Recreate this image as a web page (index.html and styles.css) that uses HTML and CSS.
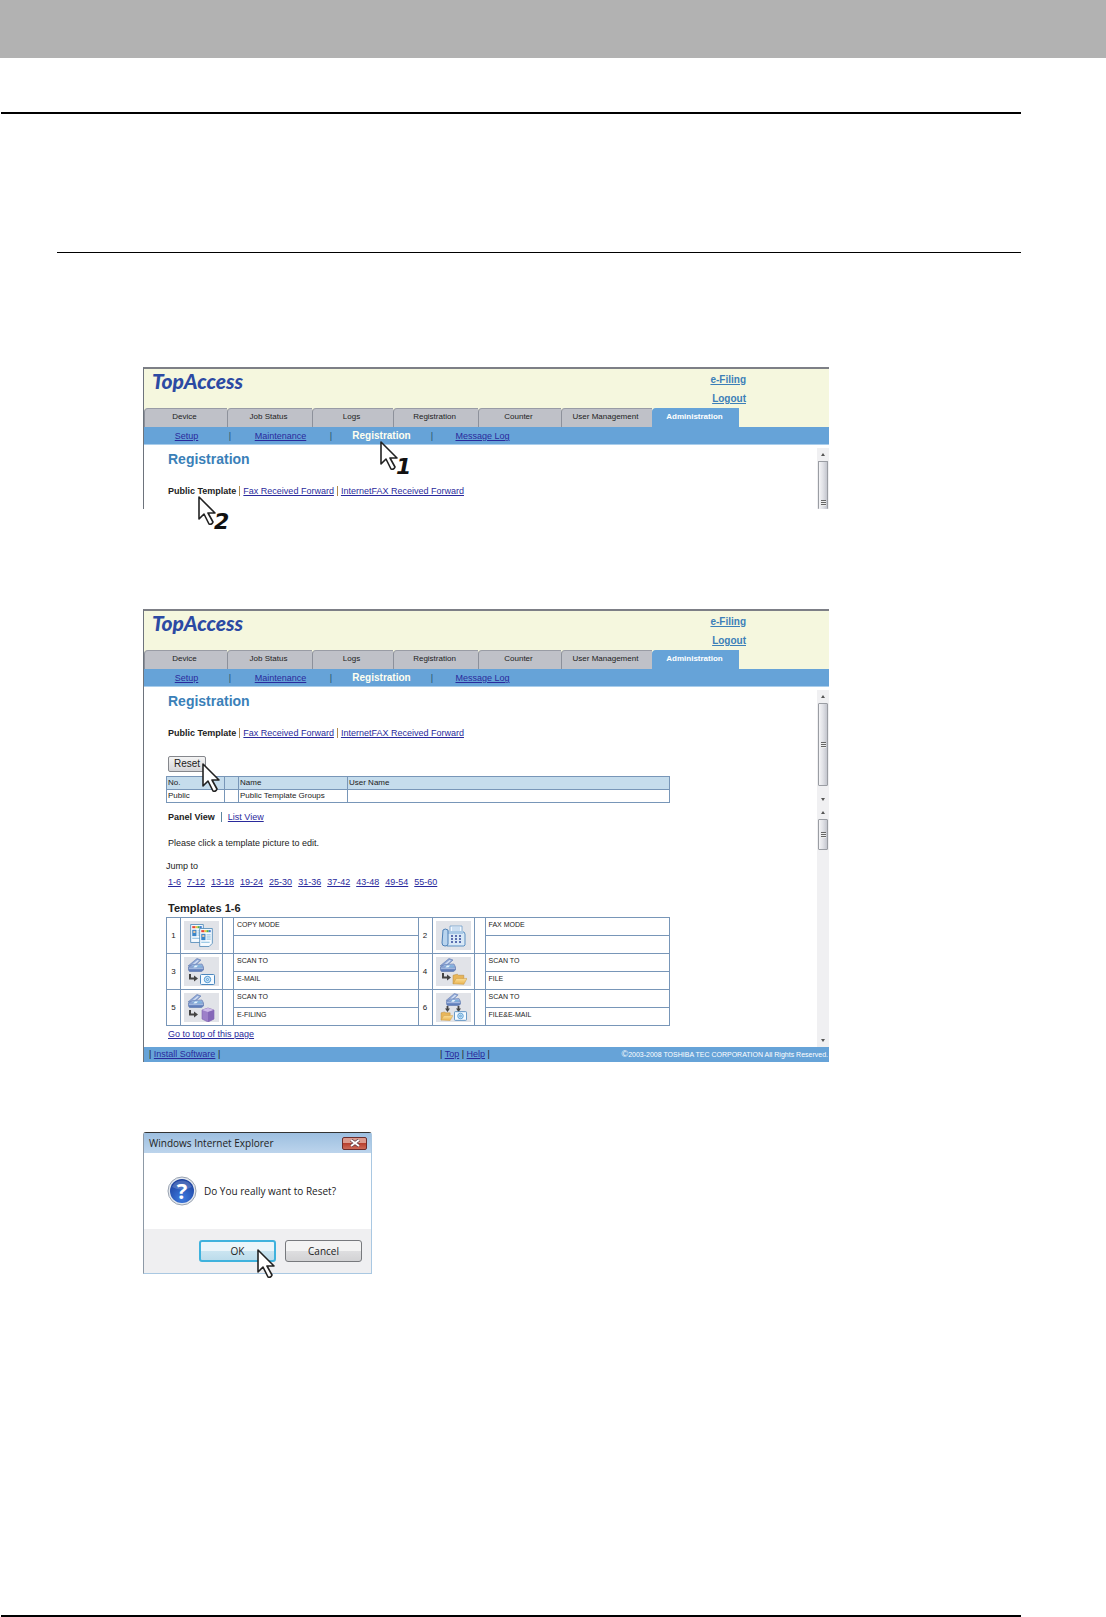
FILE: index.html
```html
<!DOCTYPE html>
<html lang="en">
<head>
    <meta charset="UTF-8">
    <meta name="viewport" content="width=device-width, initial-scale=1.0">
    <title>TopAccess - Registration</title>
    <link rel="stylesheet" href="styles.css">
</head>
<body>
    <!-- shared shapes -->
    <svg class="defs" aria-hidden="true">
        <defs>
            <linearGradient id="blueBody" x1="0" y1="0" x2="0" y2="1">
                <stop offset="0" stop-color="#a9bfe6"/>
                <stop offset="1" stop-color="#5474b4"/>
            </linearGradient>
            <linearGradient id="gold" x1="0" y1="0" x2="0" y2="1">
                <stop offset="0" stop-color="#fbdf98"/>
                <stop offset="1" stop-color="#eab24e"/>
            </linearGradient>
            <radialGradient id="ball" cx="50%" cy="80%" r="80%">
                <stop offset="0" stop-color="#3d7be0"/>
                <stop offset="1" stop-color="#1c3f9c"/>
            </radialGradient>
            <symbol id="cursor" viewBox="0 0 20 32">
                <path d="M2 2v22l5-5 5 10q3 1 4-2l-5-9h7z" fill="#fff" stroke="#222" stroke-width="1.6" stroke-linejoin="round"/>
            </symbol>
            <symbol id="scanner" viewBox="0 0 16 14">
                <path d="M0 8L9 .5l4 1.500L6 8.500z" fill="#8ea6d4" stroke="#5f7ab2" stroke-width=".6"/>
                <path d="M3 7.500l6.500-5.500 1.500.6L5 8z" fill="#d3e0f4"/>
                <path d="M.5 9l4-2.500L14 6l1.500 3v3l-2 1.500h-12L.5 12z" fill="url(#blueBody)" stroke="#5874ac" stroke-width=".6"/>
                <path d="M5.500 7.500l7.500-.3 1 2-9 .3z" fill="#7fb3de"/>
                <path d="M7 7.600l3-.1-1.500 1.800-3 .1z" fill="#e8f4fc"/>
                <path d="M1 10.300h14" stroke="#c6d4ee" stroke-width=".7"/>
            </symbol>
            <symbol id="folder" viewBox="0 0 14 11">
                <path d="M1 10V2l4-1 1 1h5v3z" fill="#e8b65a" stroke="#b98a37" stroke-width=".5"/>
                <path d="M1 10l3-5h10l-3 5.500z" fill="url(#gold)" stroke="#c99a45" stroke-width=".5"/>
            </symbol>
            <symbol id="mail" viewBox="0 0 15 11">
                <rect x=".5" y=".5" width="14" height="10" rx="1" fill="#f4faff" stroke="#4b86bd"/>
                <circle cx="7.500" cy="5.500" r="3.200" fill="#cfe6f8" stroke="#3f8fce" stroke-width=".9"/>
                <circle cx="7.500" cy="5.500" r="1.100" fill="none" stroke="#3f8fce" stroke-width=".8"/>
            </symbol>
            <symbol id="elbow" viewBox="0 0 9 8">
                <path d="M1 0v4.500h5" fill="none" stroke="#444" stroke-width="2"/>
                <path d="M5 1.500l4 3-4 3z" fill="#444"/>
            </symbol>
            <symbol id="down" viewBox="0 0 5 6">
                <path d="M1.600 0h1.800v2.500H5L2.500 6 0 2.500h1.600z" fill="#444"/>
            </symbol>
            <symbol id="sheet" viewBox="0 0 13 18">
                <path d="M.5.5h12v14l-3 3h-9z" fill="#f6fbff" stroke="#4f8ab8" stroke-width=".8"/>
                <path d="M2 2h3v2H2z" fill="#e3473b"/>
                <path d="M5 2h2v2H5z" fill="#f2c230"/>
                <path d="M7 2h2v2H7z" fill="#54b14b"/>
                <path d="M9 2h2v2H9z" fill="#3c79cf"/>
                <path d="M2 5.500h4v6H2z" fill="#3a86c8"/>
                <path d="M3 6.500h2v2H3z" fill="#f0c9a0"/>
                <path d="M7 6.500h4M7 8.500h4M7 10.500h4M2 13.500h8" stroke="#6fb0d8" stroke-width=".8"/>
            </symbol>
        </defs>
    </svg>

    <div class="page-bar"></div>
    <hr class="rule rule-thick">
    <hr class="rule rule-thin">

    <main class="figures">
        <!-- step 1: open the registration page -->
        <section class="screen screen-short">
            <header class="top">
                <div class="logo">TopAccess</div>
                <div class="top-links">
                    <a href="#">e-Filing</a>
                    <a href="#">Logout</a>
                </div>
            </header>
            <ul class="tabs">
                <li class="tab tab-device"><a href="#">Device</a></li>
                <li class="tab tab-job"><a href="#">Job Status</a></li>
                <li class="tab tab-logs"><a href="#">Logs</a></li>
                <li class="tab tab-reg"><a href="#">Registration</a></li>
                <li class="tab tab-counter"><a href="#">Counter</a></li>
                <li class="tab tab-user"><a href="#">User Management</a></li>
                <li class="tab tab-admin"><a href="#">Administration</a></li>
            </ul>
            <ul class="subnav">
                <li class="item item-first"><a href="#">Setup</a></li>
                <li class="sep">|</li>
                <li class="item"><a href="#">Maintenance</a></li>
                <li class="sep">|</li>
                <li class="item current">Registration</li>
                <li class="sep">|</li>
                <li class="item"><a href="#">Message Log</a></li>
            </ul>
            <div class="pane">
                <div class="content content-upper">
                    <h2>Registration</h2>
                    <div class="views">
                        <b>Public Template</b>
                        <i class="tick"></i>
                        <a href="#">Fax Received Forward</a>
                        <i class="tick"></i>
                        <a href="#">InternetFAX Received Forward</a>
                    </div>
                </div>
                <div class="scroll scroll-top">
                    <span class="arrow arrow-up"></span>
                    <span class="thumb thumb-cut"><i class="grip"></i></span>
                </div>
            </div>
            <svg class="pointer pointer-one"><use href="#cursor"/></svg>
            <span class="step step-one">1</span>
            <svg class="pointer pointer-two"><use href="#cursor"/></svg>
            <span class="step step-two">2</span>
        </section>

        <!-- step 2: press reset -->
        <section class="screen screen-full">
            <header class="top">
                <div class="logo">TopAccess</div>
                <div class="top-links">
                    <a href="#">e-Filing</a>
                    <a href="#">Logout</a>
                </div>
            </header>
            <ul class="tabs">
                <li class="tab tab-device"><a href="#">Device</a></li>
                <li class="tab tab-job"><a href="#">Job Status</a></li>
                <li class="tab tab-logs"><a href="#">Logs</a></li>
                <li class="tab tab-reg"><a href="#">Registration</a></li>
                <li class="tab tab-counter"><a href="#">Counter</a></li>
                <li class="tab tab-user"><a href="#">User Management</a></li>
                <li class="tab tab-admin"><a href="#">Administration</a></li>
            </ul>
            <ul class="subnav">
                <li class="item item-first"><a href="#">Setup</a></li>
                <li class="sep">|</li>
                <li class="item"><a href="#">Maintenance</a></li>
                <li class="sep">|</li>
                <li class="item current">Registration</li>
                <li class="sep">|</li>
                <li class="item"><a href="#">Message Log</a></li>
            </ul>
            <div class="pane">
                <div class="content content-upper">
                    <h2>Registration</h2>
                    <div class="views">
                        <b>Public Template</b>
                        <i class="tick"></i>
                        <a href="#">Fax Received Forward</a>
                        <i class="tick"></i>
                        <a href="#">InternetFAX Received Forward</a>
                    </div>
                    <div class="reset-row">
                        <button type="button" class="reset">Reset</button>
                        <svg class="pointer pointer-reset"><use href="#cursor"/></svg>
                    </div>
                    <table class="groups">
                        <tr>
                            <th class="g-no">No.</th>
                            <th class="g-gap"></th>
                            <th class="g-name">Name</th>
                            <th>User Name</th>
                        </tr>
                        <tr>
                            <td>Public</td>
                            <td></td>
                            <td>Public Template Groups</td>
                            <td></td>
                        </tr>
                    </table>
                </div>
                <div class="scroll scroll-top">
                    <span class="arrow arrow-up"></span>
                    <span class="thumb thumb-upper"><i class="grip"></i></span>
                    <span class="track"></span>
                    <span class="arrow arrow-down"></span>
                </div>
            </div>
            <div class="pane">
                <div class="content content-lower">
                    <div class="views views-wide">
                        <b>Panel View</b>
                        <i class="tick"></i>
                        <a href="#">List View</a>
                    </div>
                    <p class="hint">Please click a template picture to edit.</p>
                    <p class="jump">Jump to</p>
                    <div class="jump-links">
                        <a href="#">1-6</a>
                        <a href="#">7-12</a>
                        <a href="#">13-18</a>
                        <a href="#">19-24</a>
                        <a href="#">25-30</a>
                        <a href="#">31-36</a>
                        <a href="#">37-42</a>
                        <a href="#">43-48</a>
                        <a href="#">49-54</a>
                        <a href="#">55-60</a>
                    </div>
                    <h3>Templates 1-6</h3>
                    <table class="templates">
                        <colgroup>
                            <col class="t-num"><col class="t-icon"><col class="t-gap"><col>
                            <col class="t-num"><col class="t-icon"><col class="t-gap"><col>
                        </colgroup>
                        <tr>
                            <td class="num" rowspan="2">1</td>
                            <td class="pic" rowspan="2">
                                <svg viewBox="0 0 35 29">
                                    <use href="#sheet" x="6" y="3" width="14" height="19"/>
                                    <use href="#sheet" x="15" y="7" width="14" height="19"/>
                                </svg>
                            </td>
                            <td rowspan="2"></td>
                            <td>COPY MODE</td>
                            <td class="num" rowspan="2">2</td>
                            <td class="pic" rowspan="2">
                                <svg viewBox="0 0 35 29">
                                    <path d="M14 5h12v8H14z" fill="#f3f9ff" stroke="#6c9cc8" stroke-width=".8"/>
                                    <path d="M16 7h8M16 9h8" stroke="#8fb6da" stroke-width=".8"/>
                                    <path d="M11 11h17l1 2v11l-1 1H11z" fill="#d8e8f6" stroke="#5b8fc2"/>
                                    <path d="M12 10h15v3H12z" fill="#a9c9e6"/>
                                    <path d="M7 9q2-2 5 0v14q0 2-3 2t-3-3z" fill="#b9d4ee" stroke="#4c7fb5"/>
                                    <path d="M15 15h2M19 15h2M23 15h2M15 18h2M19 18h2M23 18h2M15 21h2M19 21h2M23 21h2" stroke="#5b6fb0" stroke-width="2"/>
                                </svg>
                            </td>
                            <td rowspan="2"></td>
                            <td>FAX MODE</td>
                        </tr>
                        <tr>
                            <td></td>
                            <td></td>
                        </tr>
                        <tr>
                            <td class="num" rowspan="2">3</td>
                            <td class="pic" rowspan="2">
                                <svg viewBox="0 0 35 29">
                                    <use href="#scanner" x="4" y="1" width="16" height="14"/>
                                    <use href="#elbow" x="5" y="17" width="9" height="8"/>
                                    <use href="#mail" x="16" y="17" width="15" height="11"/>
                                </svg>
                            </td>
                            <td rowspan="2"></td>
                            <td>SCAN TO</td>
                            <td class="num" rowspan="2">4</td>
                            <td class="pic" rowspan="2">
                                <svg viewBox="0 0 35 29">
                                    <use href="#scanner" x="4" y="1" width="16" height="14"/>
                                    <use href="#elbow" x="6" y="16" width="9" height="8"/>
                                    <use href="#folder" x="16" y="16" width="15" height="12"/>
                                </svg>
                            </td>
                            <td rowspan="2"></td>
                            <td>SCAN TO</td>
                        </tr>
                        <tr>
                            <td>E-MAIL</td>
                            <td>FILE</td>
                        </tr>
                        <tr>
                            <td class="num" rowspan="2">5</td>
                            <td class="pic" rowspan="2">
                                <svg viewBox="0 0 35 29">
                                    <use href="#scanner" x="4" y="1" width="16" height="14"/>
                                    <use href="#elbow" x="5" y="17" width="9" height="8"/>
                                    <path d="M18 17l6-2 6 2v9l-6 3-6-3z" fill="#9d80c9" stroke="#7d63ad" stroke-width=".6"/>
                                    <path d="M18 17l6-2 6 2-6 2z" fill="#cfbcea"/>
                                    <path d="M24 19l6-2v9l-6 3z" fill="#8568b8"/>
                                </svg>
                            </td>
                            <td rowspan="2"></td>
                            <td>SCAN TO</td>
                            <td class="num" rowspan="2">6</td>
                            <td class="pic" rowspan="2">
                                <svg viewBox="0 0 35 29">
                                    <use href="#scanner" x="10" y="0" width="15" height="13"/>
                                    <use href="#down" x="9" y="13" width="5" height="6"/>
                                    <use href="#down" x="20" y="13" width="5" height="6"/>
                                    <use href="#folder" x="4" y="18" width="13" height="10"/>
                                    <use href="#mail" x="18" y="18" width="13" height="10"/>
                                </svg>
                            </td>
                            <td rowspan="2"></td>
                            <td>SCAN TO</td>
                        </tr>
                        <tr>
                            <td>E-FILING</td>
                            <td>FILE&amp;E-MAIL</td>
                        </tr>
                    </table>
                    <a class="go-top" href="#">Go to top of this page</a>
                </div>
                <div class="scroll">
                    <span class="arrow arrow-up"></span>
                    <span class="thumb thumb-lower"><i class="grip"></i></span>
                    <span class="track"></span>
                    <span class="arrow arrow-down"></span>
                </div>
            </div>
            <footer class="bottom">
                <div class="bottom-left">| <a href="#">Install Software</a> |</div>
                <div class="bottom-mid">| <a href="#">Top</a> | <a href="#">Help</a> |</div>
                <div class="copyright"><span class="copy-sign">©</span>2003-2008 TOSHIBA TEC CORPORATION All Rights Reserved.</div>
            </footer>
        </section>

        <!-- step 3: confirm -->
        <section class="dialog">
            <div class="dialog-title">
                <span>Windows Internet Explorer</span>
                <button type="button" class="close" aria-label="Close">
                    <svg viewBox="0 0 12 8"><path d="M2 1l8 6M10 1L2 7" stroke="#5b3a44" stroke-width="3.400"/><path d="M2 1l8 6M10 1L2 7" stroke="#fff" stroke-width="2"/></svg>
                </button>
            </div>
            <div class="dialog-body">
                <svg class="question" viewBox="0 0 30 30">
                    <circle cx="15" cy="15" r="14" fill="#e4e9f0" stroke="#9aa3b0"/>
                    <circle cx="15" cy="15" r="12" fill="url(#ball)"/>
                    <path d="M5 11a11 11 0 0 1 20 0q-10 5-20 0z" fill="#fff" opacity=".18"/>
                    <text x="15" y="23" text-anchor="middle">?</text>
                </svg>
                <p>Do You really want to Reset?</p>
            </div>
            <div class="dialog-buttons">
                <button type="button" class="btn btn-ok">OK</button>
                <button type="button" class="btn">Cancel</button>
                <svg class="pointer pointer-ok"><use href="#cursor"/></svg>
            </div>
        </section>
    </main>

    <hr class="rule rule-bottom">
</body>
</html>
```
FILE: styles.css
```css
*{
    margin: 0;
    padding: 0;
    box-sizing: border-box;
}

body{
    display: flex;
    flex-direction: column;
    min-height: 100vh;
    background-color: #fff;
    color: #222;
    font-family: "Liberation Sans", Arial, sans-serif;
    font-size: 9px;
    line-height: 14px;
}

ul{
    list-style: none;
}

a{
    color: #2a2a9c;
}

.defs{
    position: absolute;
    width: 0;
    height: 0;
}

/* page frame */
.page-bar{
    height: 58px;
    background-color: #b2b2b2;
}
.rule{
    border: 0;
    background-color: #000;
    margin-right: 85px;
}
.rule-thick{
    height: 2px;
    margin-top: 54px;
    margin-left: 1px;
}
.rule-thin{
    height: 1px;
    margin-top: 138px;
    margin-left: 57px;
}
.rule-bottom{
    height: 2px;
    margin-top: auto;
    margin-left: 1px;
}
.figures{
    padding: 114px 85px 60px 143px;
}

/* TopAccess window */
.screen{
    position: relative;
    max-width: 686px;
    border-top: 2px solid #7d7f86;
    border-left: 1px solid #6d737c;
}
.screen-full{
    margin-top: 100px;
}
.top{
    display: flex;
    justify-content: space-between;
    align-items: flex-start;
    height: 39px;
    padding: 0 83px 0 8px;
    background-color: #f5f7de;
}
.logo{
    font-family: Lato, sans-serif;
    font-size: 21px;
    font-weight: 900;
    font-style: italic;
    line-height: 24px;
    color: #2c4aa3;
}
.top-links{
    display: flex;
    flex-direction: column;
    align-items: flex-end;
    padding-top: 1px;
    font-size: 10px;
    font-weight: bold;
    line-height: 19px;
}
.top-links a{
    color: #3c7fb8;
}

.tabs{
    display: flex;
    height: 19px;
    background-color: #f5f7de;
    font-size: 8px;
    line-height: 16px;
}
.tab{
    padding-right: 3px;
    text-align: center;
    background-color: #bfc1c8;
    border-top: 1px solid #999ca5;
    border-left: 1px solid #8d919b;
    border-top-left-radius: 4px;
}
.tab a{
    color: #222;
    text-decoration: none;
}
.tab-device{
    width: 83px;
}
.tab-job{
    width: 85px;
}
.tab-logs{
    width: 81px;
}
.tab-reg{
    width: 85px;
}
.tab-counter{
    width: 83px;
}
.tab-user{
    width: 91px;
}
.tab-admin{
    width: 87px;
    background-color: #66a3d8;
    border-color: #66a3d8;
    font-weight: bold;
}
.tab-admin a{
    color: #fff;
}

.subnav{
    display: flex;
    height: 18px;
    background-color: #66a3d8;
    border-bottom: 1px solid #a9cdeb;
    line-height: 18px;
}
.item{
    width: 91px;
    text-align: center;
}
.item-first{
    width: 81px;
    padding-left: 4px;
}
.sep{
    width: 10px;
    text-align: center;
    color: #28506a;
}
.current{
    font-size: 10px;
    font-weight: bold;
    color: #fffff0;
}

.pane{
    display: flex;
    justify-content: space-between;
}
.content{
    flex: 1;
    min-width: 0;
}
.content-upper{
    padding: 5px 10px 3px 24px;
}
.content-lower{
    padding: 4px 10px 6px 24px;
}
.screen-short .content-upper{
    padding-bottom: 11px;
}
h2{
    font-size: 14px;
    line-height: 18px;
    color: #3a80b8;
}
h3{
    margin-top: 12px;
    font-size: 11px;
    line-height: 14px;
}
.views{
    display: flex;
    align-items: center;
    gap: 3px;
    margin-top: 16px;
}
.views-wide{
    gap: 6px;
    margin-top: 0;
}
.tick{
    width: 1px;
    height: 10px;
    background-color: #b08a4c;
}
.views-wide .tick{
    background-color: #5b86a0;
}
.reset-row{
    position: relative;
    display: flex;
    margin-top: 16px;
}
.reset{
    height: 16px;
    width: 38px;
    border: 1px solid #85878c;
    border-radius: 2px;
    background: linear-gradient(#f4f4f4, #d5d5d8);
    font-family: inherit;
    font-size: 10px;
    line-height: 14px;
    color: #222;
}

.groups,
.templates{
    width: 100%;
    max-width: 504px;
    margin-left: -2px;
    border-collapse: collapse;
    table-layout: fixed;
}
.groups th,
.groups td,
.templates td{
    border: 1px solid #7896b8;
    text-align: left;
}
.groups{
    margin-top: 4px;
    font-size: 8px;
    line-height: 12px;
}
.groups th,
.groups td{
    height: 13px;
    padding: 0 0 0 1px;
    font-weight: normal;
}
.groups th{
    background-color: #c5dcec;
}
.g-no{
    width: 58px;
}
.g-gap{
    width: 14px;
}
.g-name{
    width: 109px;
}

.hint{
    margin-top: 12px;
}
.jump{
    margin-top: 9px;
    margin-left: -2px;
}
.jump-links{
    display: flex;
    gap: 6px;
    margin-top: 2px;
}
.templates{
    margin-top: 2px;
    font-size: 7px;
    line-height: 11px;
}
.templates td{
    height: 18px;
    padding: 1px 0 0 3px;
    vertical-align: top;
}
.templates .num{
    padding: 0;
    text-align: center;
    vertical-align: middle;
    font-size: 8px;
}
.templates .pic{
    padding: 0;
    text-align: center;
    vertical-align: middle;
}
.pic svg{
    display: block;
    width: 35px;
    height: 29px;
    margin: 0 auto;
    background-color: #e1e3e8;
}
.t-num{
    width: 14px;
}
.t-icon{
    width: 42px;
}
.t-gap{
    width: 11px;
}
.go-top{
    display: inline-block;
    margin-top: 1px;
}

/* scrollbars */
.scroll{
    display: flex;
    flex-direction: column;
    width: 12px;
    background-color: #f0f0f2;
}
.scroll-top{
    margin-top: 3px;
}
.arrow{
    display: flex;
    align-items: center;
    justify-content: center;
    height: 13px;
}
.arrow::before{
    content: "";
    border: 2px solid transparent;
}
.arrow-up::before{
    border-top: 0;
    border-bottom: 3px solid #555;
}
.arrow-down::before{
    border-bottom: 0;
    border-top: 3px solid #555;
}
.thumb{
    display: flex;
    align-items: center;
    justify-content: center;
    margin: 0 1px;
    border: 1px solid #9a9da3;
    border-radius: 1px;
    background: linear-gradient(90deg, #f4f4f6, #e0e1e6 50%, #c4c6ce);
}
.thumb-upper{
    height: 83px;
}
.thumb-lower{
    height: 31px;
}
.thumb-cut{
    flex: 1;
    align-items: flex-end;
    padding-bottom: 3px;
    border-bottom: 0;
}
.track{
    flex: 1;
}
.grip{
    width: 5px;
    height: 6px;
    background: repeating-linear-gradient(#666 0 1px, #eee 1px 2px);
}

.bottom{
    display: grid;
    grid-template-columns: 291px 1fr auto;
    height: 15px;
    padding: 0 1px 0 5px;
    background-color: #66a3d8;
    color: #222;
    white-space: pre;
    line-height: 15px;
}
.copyright{
    font-size: 7px;
    color: #fff;
}
.copy-sign{
    font-size: 9px;
}

/* mouse pointers and step numbers over the screens */
.pointer{
    position: absolute;
    width: 20px;
    height: 32px;
}
.pointer-one{
    left: 235px;
    top: 71px;
}
.pointer-two{
    left: 53px;
    top: 126px;
}
.pointer-reset{
    left: 33px;
    top: 6px;
}
.pointer-ok{
    left: 112px;
    top: 19px;
}
.step{
    position: absolute;
    font-family: "DejaVu Sans", sans-serif;
    font-size: 22px;
    font-weight: bold;
    font-style: italic;
    line-height: 24px;
    color: #111;
}
.step-one{
    left: 252px;
    top: 86px;
}
.step-two{
    left: 70px;
    top: 141px;
}

/* confirm dialog */
.dialog{
    max-width: 229px;
    margin-top: 70px;
    border: 1px solid #a9c8e2;
    border-top-color: #333;
    border-left-color: #8d99a6;
    border-radius: 3px 3px 0 0;
    font-family: "Open Sans", sans-serif;
    font-size: 10px;
}
.dialog-title{
    display: flex;
    justify-content: space-between;
    align-items: center;
    height: 20px;
    padding: 0 4px 0 5px;
    background: linear-gradient(#9dbfe0, #bcd4ec);
}
.close{
    display: flex;
    align-items: center;
    justify-content: center;
    width: 25px;
    height: 13px;
    border: 1px solid #6b2c2c;
    border-radius: 2px;
    background: linear-gradient(#dc9a8e 45%, #b8402f 50%, #cc6a58);
}
.close svg{
    width: 12px;
    height: 8px;
}
.dialog-body{
    display: flex;
    align-items: center;
    gap: 7px;
    height: 76px;
    padding: 0 23px;
}
.question{
    width: 30px;
    height: 30px;
}
.question text{
    font-size: 22px;
    font-weight: bold;
    fill: #fff;
}
.dialog-buttons{
    position: relative;
    display: flex;
    justify-content: flex-end;
    gap: 9px;
    padding: 11px 9px;
    background-color: #efeff1;
}
.btn{
    width: 77px;
    height: 22px;
    border: 1px solid #77797d;
    border-radius: 3px;
    background: linear-gradient(#f3f3f3 50%, #dedee0 50%, #d2d2d4);
    font-family: inherit;
    font-size: 10px;
    color: #222;
}
.btn-ok{
    border: 2px solid #3fb2dd;
    background: linear-gradient(#eaf5fa 50%, #cbe5f1 50%, #bcdceb);
}
```
